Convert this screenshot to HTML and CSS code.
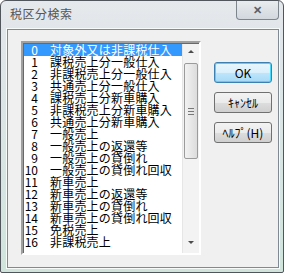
FILE: index.html
```html
<!DOCTYPE html>
<html lang="ja">
<head>
  <meta charset="utf-8">
  <title>税区分検索</title>
  <link rel="stylesheet" href="styles.css">
</head>
<body>
  <div class="window">
    <!-- Title bar -->
    <div class="titlebar">
      <span class="title">税区分検索</span>
      <button class="close-btn">&#x2715;</button>
    </div>

    <!-- Client area -->
    <div class="client">
      <div class="listbox">
        <ul class="items">
          <li class="selected"><span class="num">0</span><span class="name">対象外又は非課税仕入</span></li>
          <li><span class="num">1</span><span class="name">課税売上分一般仕入</span></li>
          <li><span class="num">2</span><span class="name">非課税売上分一般仕入</span></li>
          <li><span class="num">3</span><span class="name">共通売上分一般仕入</span></li>
          <li><span class="num">4</span><span class="name">課税売上分新車購入</span></li>
          <li><span class="num">5</span><span class="name">非課税売上分新車購入</span></li>
          <li><span class="num">6</span><span class="name">共通売上分新車購入</span></li>
          <li><span class="num">7</span><span class="name">一般売上</span></li>
          <li><span class="num">8</span><span class="name">一般売上の返還等</span></li>
          <li><span class="num">9</span><span class="name">一般売上の貸倒れ</span></li>
          <li><span class="num">10</span><span class="name">一般売上の貸倒れ回収</span></li>
          <li><span class="num">11</span><span class="name">新車売上</span></li>
          <li><span class="num">12</span><span class="name">新車売上の返還等</span></li>
          <li><span class="num">13</span><span class="name">新車売上の貸倒れ</span></li>
          <li><span class="num">14</span><span class="name">新車売上の貸倒れ回収</span></li>
          <li><span class="num">15</span><span class="name">免税売上</span></li>
          <li><span class="num">16</span><span class="name">非課税売上</span></li>
        </ul>
        <div class="scrollbar">
          <div class="arrow up"></div>
          <div class="track">
            <div class="thumb"><span class="grip"></span></div>
          </div>
          <div class="arrow down"></div>
        </div>
      </div>

      <div class="buttons">
        <button class="btn default">OK</button>
        <button class="btn">ｷｬﾝｾﾙ</button>
        <button class="btn">ﾍﾙﾌﾟ(H)</button>
      </div>
    </div>
  </div>
</body>
</html>
```

FILE: styles.css
```css
body { margin: 0; background: #fff; font-family: "Noto Sans CJK JP", "DejaVu Sans", sans-serif; }

.window {
  width: 282px; height: 271px;
  border: 1px solid #50565c; border-radius: 6px 6px 2px 2px;
  background: linear-gradient(to bottom, #e6e9ec 0, #e1e6ea 30px, #d0e4dc 100%);
  display: flex; flex-direction: column;
}

.titlebar { height: 28px; display: flex; align-items: flex-start; justify-content: space-between; }
.title { margin: 6px 0 0 9px; font-size: 12px; line-height: 14px; color: #555; letter-spacing: 0.5px; }
.close-btn {
  width: 43px; height: 19px; margin: 0 4px 0 0;
  border: 1px solid #7d858d; border-top: none; border-radius: 0 0 4px 4px;
  background: linear-gradient(to bottom, #e9ecef, #d2d8de);
  color: #5a6068; font-size: 11px; font-weight: bold; line-height: 17px; padding: 0;
}

.client {
  margin: 0 4px 4px 6px; flex: 1;
  border: 1px solid #7f8a94; background: #f0f0f0;
  display: flex; align-items: flex-start;
  padding: 11px 6px 0 13px;
  box-shadow: 0 0 0 1px #f6faf8;
}

.listbox {
  width: 176px; height: 210px;
  border: 2px solid; border-color: #a0a0a0 #fff #fff #a0a0a0;
  box-shadow: inset 1px 1px 0 #696969;
  background: #fff; display: flex;
}

.items { list-style: none; margin: 0; padding: 1px 0 0 1px; flex: 1; }
.items li { display: flex; height: 12px; font-size: 12px; line-height: 12px; color: #000; }
.items li.selected { background: #3399ff; color: #fff; }
.num { width: 14px; text-align: right; margin-right: 12px; }
.name { letter-spacing: 0.2px; }

.scrollbar { width: 16px; margin-top: 1px; display: flex; flex-direction: column; background: #f3f3f3; border-left: 1px solid #e6e6e6; }
.arrow { height: 17px; position: relative; }
.arrow::after { content: ""; position: absolute; left: 5px; border-left: 3px solid transparent; border-right: 3px solid transparent; }
.arrow.up::after { top: 6px; border-bottom: 3px solid #4d4d4d; }
.arrow.down::after { top: 5px; border-top: 3px solid #4d4d4d; }
.track { flex: 1; padding-top: 2px; }
.thumb {
  height: 94px; margin: 0 1px;
  border: 1px solid #9b9b9b; border-radius: 2px;
  background: linear-gradient(to right, #f2f2f2, #dcdcdc);
  display: flex; align-items: center; justify-content: center;
}
.grip { width: 6px; height: 5px; border-top: 1px solid #777; border-bottom: 1px solid #777; position: relative; }
.grip::after { content: ""; position: absolute; left: 0; right: 0; top: 2px; border-top: 1px solid #777; }

.buttons { margin-left: 13px; margin-top: 21px; display: flex; flex-direction: column; gap: 9px; }
.btn {
  width: 58px; height: 21px; padding: 0;
  border: 1px solid #707070; border-radius: 3px;
  background: linear-gradient(to bottom, #f3f3f3 0, #ebebeb 50%, #dddddd 51%, #cfcfcf 100%);
  font-family: "Noto Sans CJK JP", sans-serif; font-size: 12px; color: #000;
}
.btn.default {
  border-color: #3c7fb1;
  background: linear-gradient(to bottom, #eaf6fd 0, #d9f0fc 50%, #bee6fd 51%, #a7d9f5 100%);
  box-shadow: inset 0 0 0 1px #48d8fb;
}
```
